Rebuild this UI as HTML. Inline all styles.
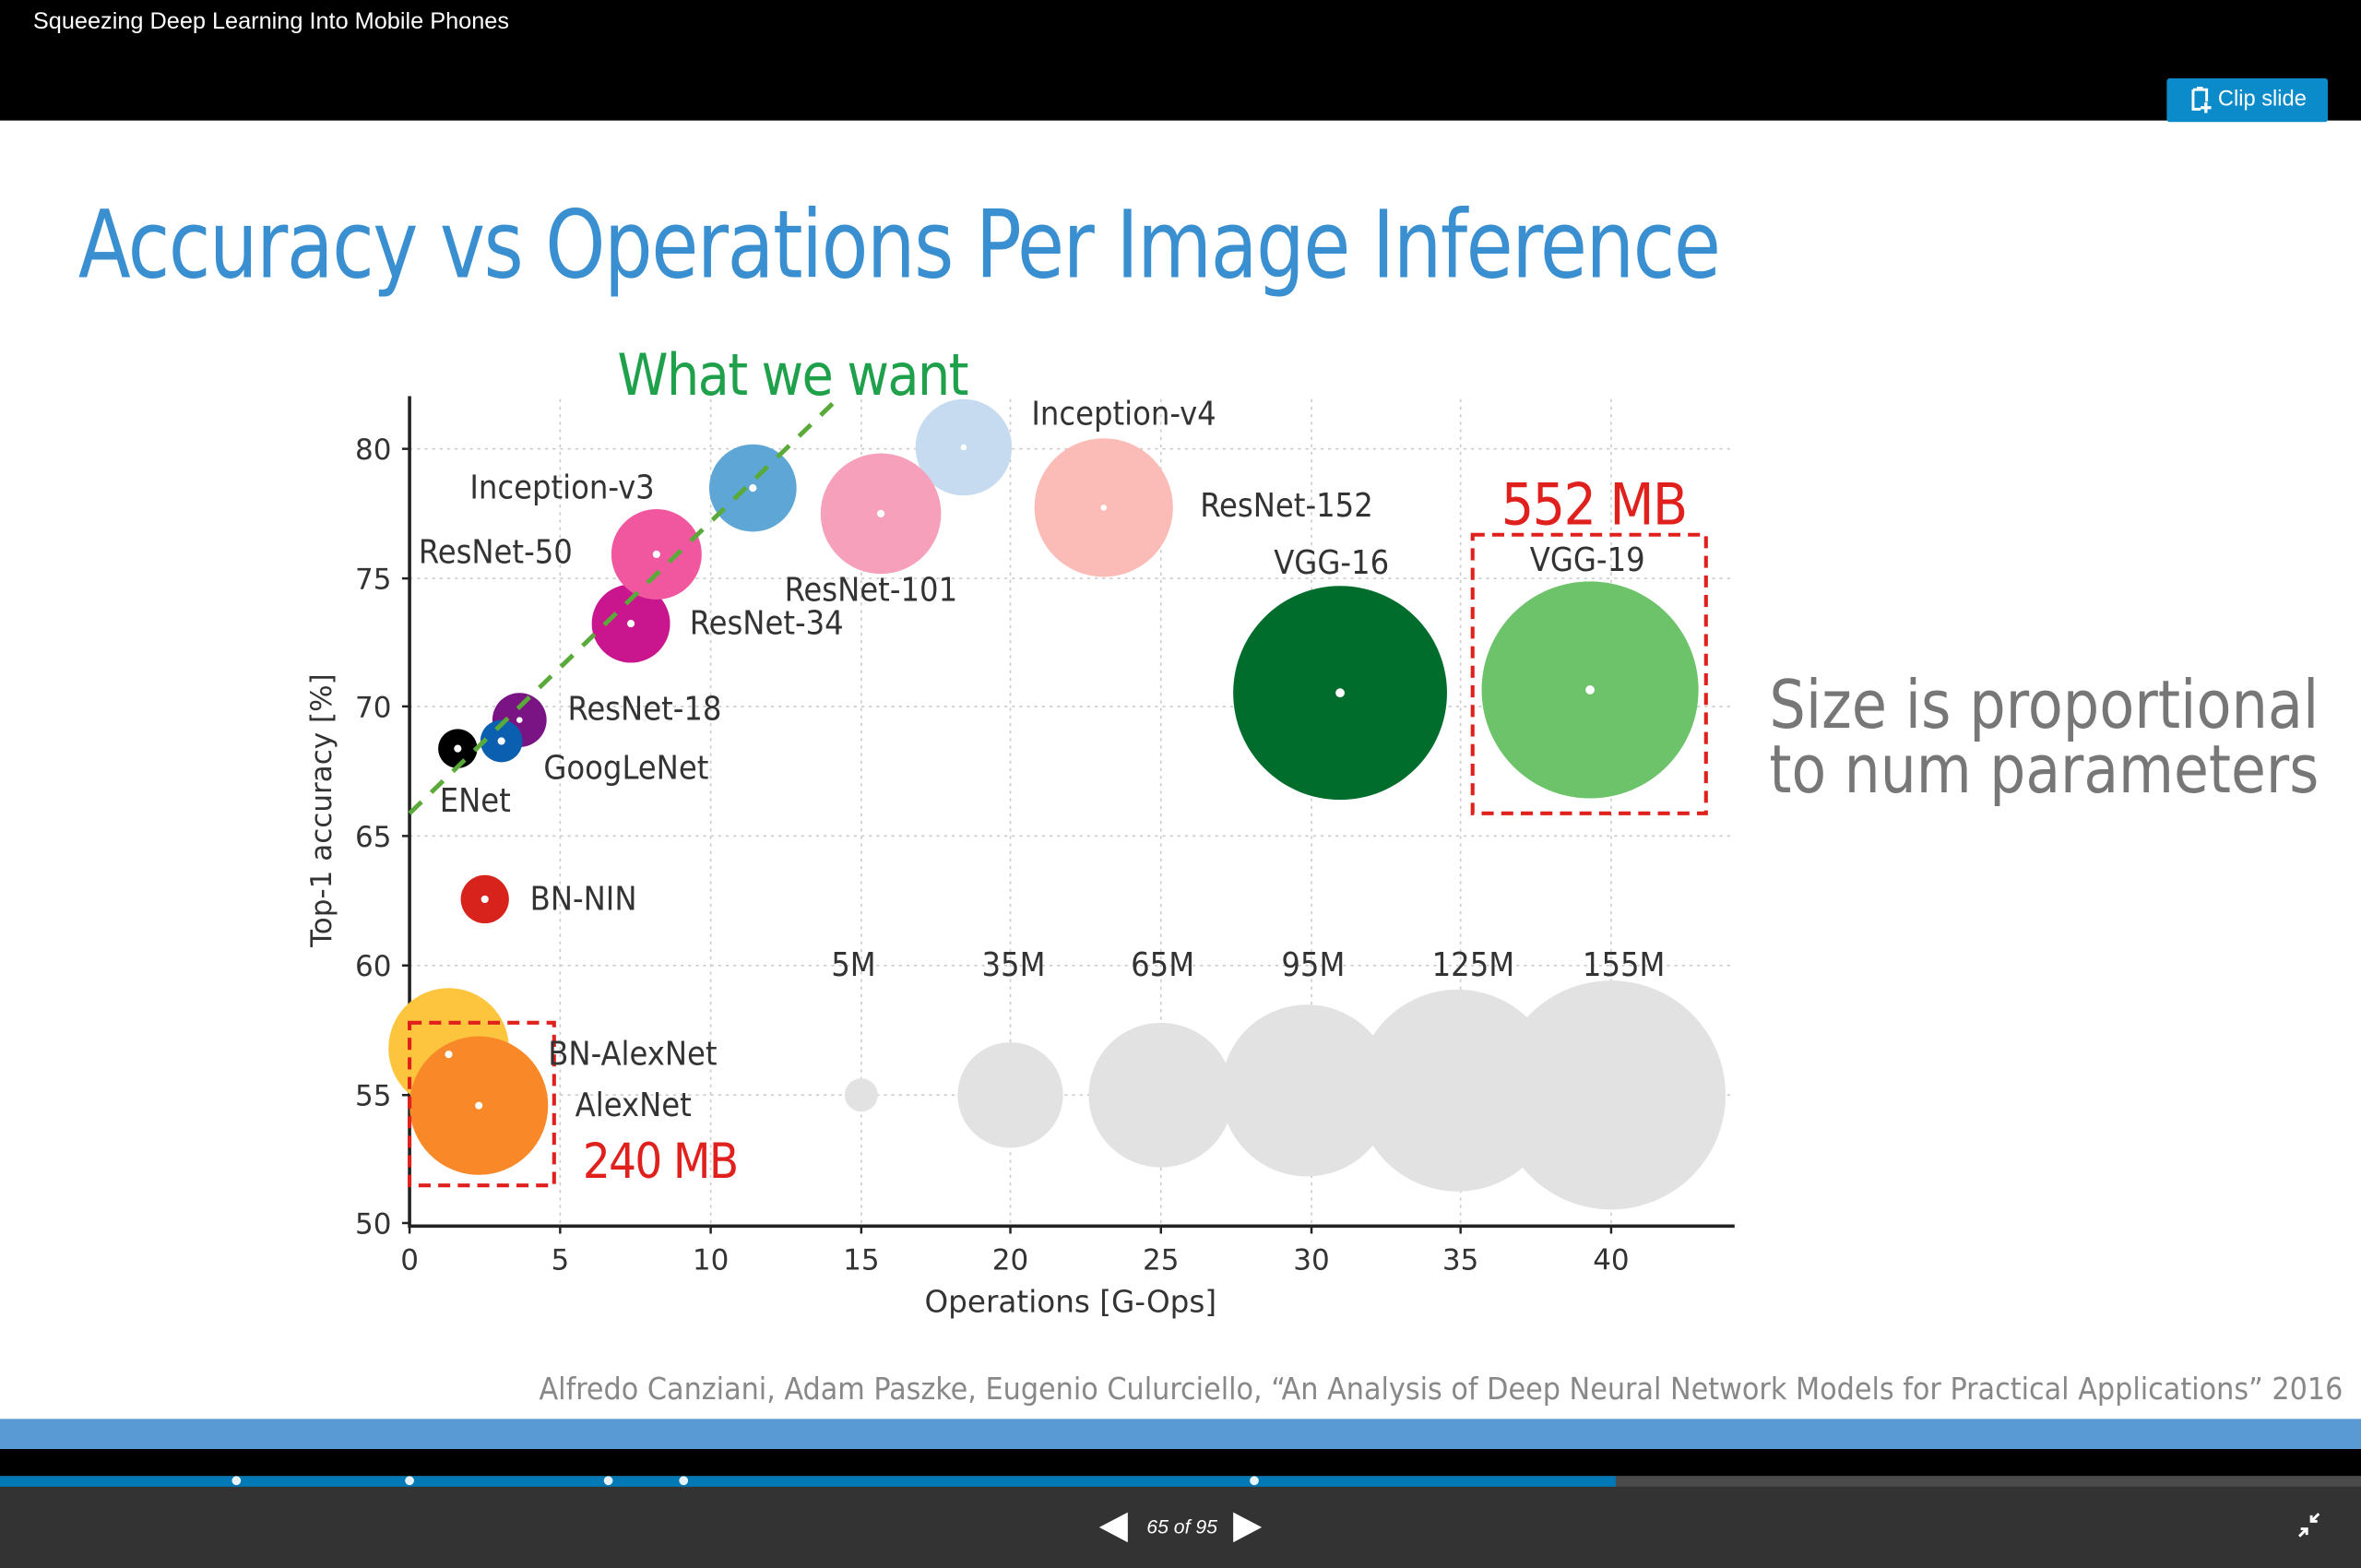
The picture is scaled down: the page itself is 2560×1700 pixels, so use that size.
<!DOCTYPE html>
<html><head><meta charset="utf-8"><style>
html,body{margin:0;padding:0;width:2560px;height:1700px;overflow:hidden;background:#fff}
svg{display:block}
</style></head><body>
<svg width="2560" height="1700" viewBox="0 0 1568 1041" preserveAspectRatio="none" xmlns="http://www.w3.org/2000/svg" font-family="'Liberation Sans', 'DejaVu Sans', sans-serif">
<rect x="0" y="0" width="1568" height="80" fill="#000"/>
<text x="22" y="19" font-size="15.5" fill="#fff">Squeezing Deep Learning Into Mobile Phones</text>
<rect x="1439" y="52" width="107" height="29" rx="2" fill="#0b8bc9"/>
<g fill="none" stroke="#fff" stroke-width="1.8">
<path d="M1456.5 59.5 h9 v8 M1456.5 59.5 v13 h5"/>
<path d="M1459 58.5 h4"/>
</g>
<path d="M1465 68 v7 M1461.5 71.5 h7" stroke="#fff" stroke-width="2"/>
<text x="1473" y="70" font-size="14.5" fill="#fff">Clip slide</text>

<text x="52" y="184" font-size="62" fill="#3a8fd0" font-family="'DejaVu Sans Condensed','Liberation Sans Narrow','Liberation Sans',sans-serif" textLength="1090" lengthAdjust="spacingAndGlyphs" letter-spacing="-1">Accuracy vs Operations Per Image Inference</text>

<g stroke="#ccc" stroke-width="1" stroke-dasharray="2,3">
<path d="M272 298H1150M272 384H1150M272 469H1150M272 555H1150M272 641H1150M272 727H1150"/>
<path d="M372 265V812M472 265V812M572 265V812M671 265V812M771 265V812M871 265V812M970 265V812M1070 265V812"/>
</g>
<path d="M272 263V814H1152" stroke="#222" stroke-width="2.2" fill="none"/>
<g stroke="#222" stroke-width="1.5">
<path d="M267 298h5M267 384h5M267 469h5M267 555h5M267 641h5M267 727h5M267 812h5"/>
<path d="M272 814v5M372 814v5M472 814v5M572 814v5M671 814v5M771 814v5M871 814v5M970 814v5M1070 814v5"/>
</g>
<g font-size="19" fill="#333" text-anchor="end" font-family="'DejaVu Sans',sans-serif">
<text x="260" y="305">80</text><text x="260" y="391">75</text><text x="260" y="476">70</text>
<text x="260" y="562">65</text><text x="260" y="648">60</text><text x="260" y="734">55</text><text x="260" y="819">50</text>
</g>
<g font-size="19" fill="#333" text-anchor="middle" font-family="'DejaVu Sans',sans-serif">
<text x="272" y="843">0</text><text x="372" y="843">5</text><text x="472" y="843">10</text><text x="572" y="843">15</text>
<text x="671" y="843">20</text><text x="771" y="843">25</text><text x="871" y="843">30</text><text x="970" y="843">35</text><text x="1070" y="843">40</text>
<text x="711" y="871" font-size="20">Operations [G-Ops]</text>
</g>
<text transform="translate(220,538) rotate(-90)" font-size="19" fill="#333" text-anchor="middle" font-family="'DejaVu Sans',sans-serif">Top-1 accuracy [%]</text>

<circle cx="640" cy="297" r="32" fill="#c6dbef"/>
<circle cx="733" cy="337" r="46" fill="#fbbcb8"/>
<circle cx="585" cy="341" r="40" fill="#f7a0bc"/>
<circle cx="500" cy="324" r="29" fill="#5ea6d6"/>
<circle cx="419" cy="414" r="26" fill="#c9168e"/>
<circle cx="436" cy="368" r="30" fill="#f0579f"/>
<circle cx="345" cy="478" r="18" fill="#7a1384"/>
<circle cx="333" cy="492" r="14" fill="#0b5fb0"/>
<circle cx="304" cy="497" r="13" fill="#000"/>
<circle cx="322" cy="597" r="16" fill="#d8221c"/>
<circle cx="890" cy="460" r="71" fill="#006d2c"/>
<circle cx="1056" cy="458" r="72" fill="#6cc36a"/>
<circle cx="298" cy="696" r="40" fill="#fdc43e"/>
<circle cx="318" cy="734" r="46" fill="#f98829"/>
<g fill="#e2e2e2">
<circle cx="572" cy="727" r="11"/><circle cx="671" cy="727" r="35"/><circle cx="771" cy="727" r="48"/>
<circle cx="868" cy="724" r="57"/><circle cx="968" cy="724" r="67"/><circle cx="1070" cy="727" r="76"/>
</g>
<g fill="#fff">
<circle cx="640" cy="297" r="2"/><circle cx="733" cy="337" r="2"/><circle cx="585" cy="341" r="2.5"/><circle cx="500" cy="324" r="2.5"/>
<circle cx="419" cy="414" r="2.5"/><circle cx="436" cy="368" r="2.5"/><circle cx="345" cy="478" r="2"/><circle cx="333" cy="492" r="2.5"/>
<circle cx="304" cy="497" r="2.5"/><circle cx="322" cy="597" r="2.5"/><circle cx="890" cy="460" r="3"/><circle cx="1056" cy="458" r="3"/>
<circle cx="298" cy="700" r="2.5"/><circle cx="318" cy="734" r="2.5"/>
</g>
<path d="M272 540 L555 266" stroke="#5aaa3a" stroke-width="3" stroke-dasharray="11,9"/>
<g fill="none" stroke="#e0201c" stroke-width="2.5" stroke-dasharray="8,5">
<rect x="978" y="355" width="155" height="185"/>
<rect x="272" y="679" width="96" height="108"/>
</g>

<g font-size="22" fill="#333" font-family="'DejaVu Sans Condensed','DejaVu Sans',sans-serif">
<text x="685" y="282">Inception-v4</text>
<text x="312" y="331">Inception-v3</text>
<text x="797" y="343">ResNet-152</text>
<text x="278" y="374">ResNet-50</text>
<text x="521" y="399">ResNet-101</text>
<text x="458" y="421">ResNet-34</text>
<text x="846" y="381">VGG-16</text>
<text x="1016" y="379">VGG-19</text>
<text x="377" y="478">ResNet-18</text>
<text x="361" y="517">GoogLeNet</text>
<text x="292" y="539">ENet</text>
<text x="352" y="604">BN-NIN</text>
<text x="364" y="707">BN-AlexNet</text>
<text x="382" y="741">AlexNet</text>
<text x="552" y="648">5M</text><text x="652" y="648">35M</text><text x="751" y="648">65M</text>
<text x="851" y="648">95M</text><text x="951" y="648">125M</text><text x="1051" y="648">155M</text>
</g>
<text x="410" y="262" font-size="38" fill="#1fa04a" font-family="'DejaVu Sans Condensed','Liberation Sans',sans-serif" letter-spacing="-1">What we want</text>
<text x="997" y="348" font-size="38" fill="#e0201c" font-family="'DejaVu Sans Condensed','Liberation Sans',sans-serif" letter-spacing="-1">552 MB</text>
<text x="387" y="782" font-size="32" fill="#e0201c" font-family="'DejaVu Sans Condensed','Liberation Sans',sans-serif" letter-spacing="-1">240 MB</text>
<g font-size="44" fill="#777" font-family="'DejaVu Sans Condensed','Liberation Sans',sans-serif" font-weight="300">
<text x="1175" y="483" textLength="365" lengthAdjust="spacingAndGlyphs">Size is proportional</text>
<text x="1175" y="526" textLength="365" lengthAdjust="spacingAndGlyphs">to num parameters</text>
</g>
<text x="358" y="929" font-size="20" fill="#888" font-family="'DejaVu Sans Condensed','Liberation Sans',sans-serif" textLength="1198" lengthAdjust="spacingAndGlyphs">Alfredo Canziani, Adam Paszke, Eugenio Culurciello, “An Analysis of Deep Neural Network Models for Practical Applications” 2016</text>

<rect x="0" y="942" width="1568" height="20" fill="#5a9ad4"/>
<rect x="0" y="962" width="1568" height="18" fill="#000"/>
<rect x="0" y="980" width="1568" height="61" fill="#333"/>
<rect x="0" y="980" width="1568" height="7" fill="#4a4a4a"/>
<rect x="0" y="980" width="1073" height="7" fill="#0079b6"/>
<g fill="#e6f2fa">
<circle cx="157" cy="983" r="3"/><circle cx="272" cy="983" r="3"/><circle cx="404" cy="983" r="3"/><circle cx="454" cy="983" r="3"/><circle cx="833" cy="983" r="3"/>
</g>
<path d="M749 1004 V1024 L730 1014 Z" fill="#fff"/>
<path d="M819 1004 V1024 L838 1014 Z" fill="#fff"/>
<text x="785" y="1018" font-size="13" fill="#fff" font-style="italic" text-anchor="middle">65 of 95</text>
<g stroke="#fff" stroke-width="1.8" fill="none">
<path d="M1540 1005 L1535 1010 M1535 1006 v4 h4"/>
<path d="M1527 1020 L1532 1015 M1528 1015 h4 v4"/>
</g>
</svg>
</body></html>
